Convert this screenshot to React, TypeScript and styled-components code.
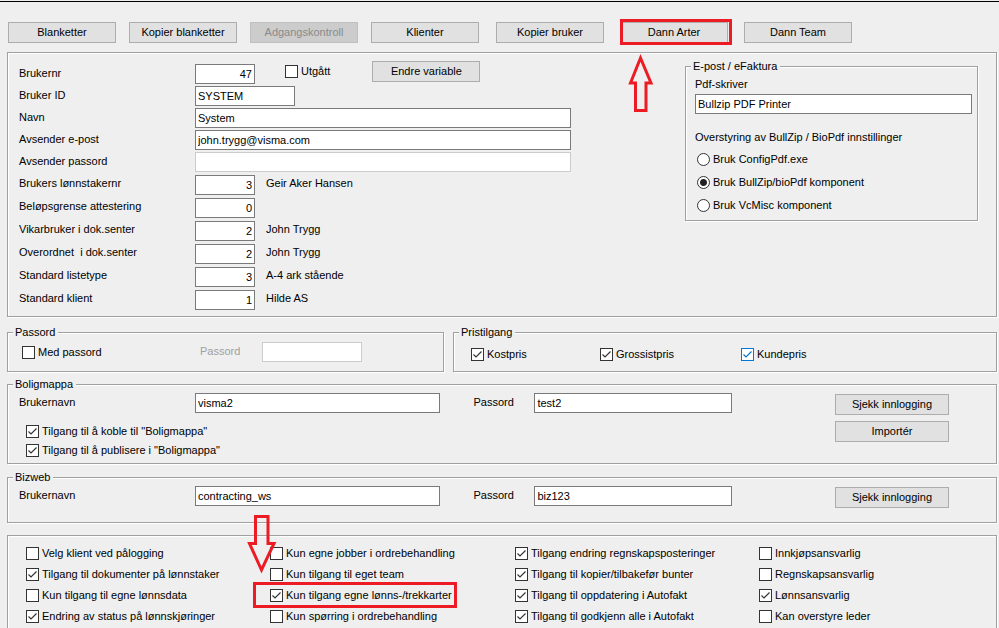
import React, { useId, type ReactNode } from "react";
import styled, { createGlobalStyle, css } from "styled-components";

const GlobalStyle = createGlobalStyle`
  *, *::before, *::after { box-sizing: border-box; }
  body {
    margin: 0;
    background: #efefef;
    color: #000;
    font: 11px/13px "Liberation Sans", Arial, sans-serif;
  }
`;

const RED = "#ed1c24";

const Page = styled.main`
  display: flex;
  flex-direction: column;
  min-height: 100vh;
  padding: 20px 2px 0 7px;
  overflow: hidden;
`;

const TopRule = styled.div`
  height: 1px;
  margin: -19px -2px 20px -7px;
  background: #000;
`;

const ButtonBar = styled.nav`
  display: flex;
  gap: 17px;
  padding-left: 1px;
`;

const ButtonGroup = styled.div<{ $gap: number }>`
  display: flex;
  gap: ${(p) => p.$gap}px;
`;

const PushButton = styled.button<{ $wide?: boolean }>`
  width: ${(p) => (p.$wide ? 114 : 108)}px;
  height: 21px;
  padding: 0;
  border: 1px solid #adadad;
  background: #e1e1e1;
  color: #000;
  font: inherit;
  white-space: nowrap;

  &:disabled {
    border-color: #bfbfbf;
    background: #cccccc;
    color: #8a8a8a;
  }
`;

const etched = css`
  border: 1px solid #a0a0a0;
  box-shadow: 1px 1px 0 #fff, inset 1px 1px 0 #fff;
`;

const Panel = styled.section`
  ${etched}
  display: flex;
  justify-content: space-between;
  margin-top: 9px;
  padding: 10px 18px 5px 11px;
`;

const Group = styled.fieldset`
  ${etched}
  min-width: 0;
  margin: 0;
  padding: 0 0 0 11px;
`;

const Legend = styled.legend`
  margin-left: -6px;
  padding: 0 3px 0 2px;
  background: #efefef;
  line-height: 13px;
`;

const Rows = styled.div`
  flex: 1;
  min-width: 0;
`;

const Row = styled.div<{ $height: number }>`
  display: grid;
  grid-template-columns: 176px minmax(0, 1fr);
  grid-template-rows: 100%;
  align-items: center;
  height: ${(p) => p.$height}px;
`;

const Label = styled.label<{ $muted?: boolean; $indent?: boolean }>`
  padding-bottom: 2px;
  padding-left: ${(p) => (p.$indent ? 33 : 0)}px;
  color: ${(p) => (p.$muted ? "#a0a0a0" : "#000")};
  white-space: pre;
`;

const Cell = styled.div`
  display: flex;
  align-items: center;
  min-width: 0;
`;

const TextBox = styled.input<{ $width?: number; $right?: boolean }>`
  width: ${(p) => (p.$width ? `${p.$width}px` : "100%")};
  min-width: 0;
  height: 20px;
  margin: 0;
  padding: 0 2px;
  border: 1px solid #7a7a7a;
  border-radius: 0;
  background: #fff;
  color: #000;
  font: inherit;
  text-align: ${(p) => (p.$right ? "right" : "left")};

  &:disabled {
    border-color: #cccccc;
  }
`;

const Note = styled.output`
  padding: 0 0 2px 11px;
  white-space: nowrap;
`;

const FirstRowExtras = styled.div`
  display: flex;
  align-items: center;
  gap: 42px;
  height: 20px;
  margin: 0 0 6px 30px;
`;

const tick = (color: string) =>
  `url("data:image/svg+xml,${encodeURIComponent(
    `<svg xmlns='http://www.w3.org/2000/svg' viewBox='0 0 11 11'><path d='M1.5 5.5 4 8 9.5 2.5' fill='none' stroke='${color}' stroke-width='1.2'/></svg>`
  )}")`;

const CheckInput = styled.input<{ $hot?: boolean }>`
  flex: none;
  appearance: none;
  width: 13px;
  height: 13px;
  margin: 0;
  border: 1px solid ${(p) => (p.$hot ? "#0078d7" : "#333")};
  background: #fff;

  &:checked {
    background-image: ${(p) => tick(p.$hot ? "#0078d7" : "#333")};
  }
`;

const RadioInput = styled.input`
  flex: none;
  appearance: none;
  width: 13px;
  height: 13px;
  margin: 0;
  border: 1px solid #333;
  border-radius: 50%;
  background: #fff;

  &:checked {
    background: radial-gradient(circle, #222 3px, #fff 4px);
  }
`;

const Choice = styled.label`
  position: relative;
  display: flex;
  align-items: center;
  gap: 3px;
  white-space: nowrap;
`;

const MailGroup = styled(Group)`
  width: 293px;
  height: 161px;
  margin-top: -3px;
  padding: 5px 5px 0 9px;
`;

const MailLegend = styled(Legend)`
  margin-left: -4px;
`;

const MailHeading = styled.p`
  margin: 17px 0 4px;
`;

const MailLabel = styled.label`
  display: block;
  margin-bottom: 3px;
`;

const RadioRow = styled.div`
  display: flex;
  align-items: center;
  height: 23px;
  padding-left: 2px;
`;

const Pair = styled.div`
  display: grid;
  grid-template-columns: 437fr 544fr;
  gap: 9px;
  margin: 9px 0 6px;
`;

const PasswordRow = styled.div`
  display: grid;
  grid-template-columns: 178px 62px 100px;
  align-items: center;
  height: 32px;
  padding: 0 0 6px 3px;
`;

const PriceRow = styled.div`
  display: grid;
  grid-template-columns: 129px 141px auto;
  align-items: center;
  height: 32px;
  padding: 0 0 1px 6px;
`;

const LoginGroup = styled(Group)<{ $height: number }>`
  height: ${(p) => p.$height}px;
  margin-bottom: 7px;
`;

const LoginRow = styled.div`
  display: grid;
  grid-template-columns: 176px minmax(0, 246fr) 94px minmax(0, 198fr) 217px;
  align-items: start;
  padding: 2px 47px 0 0;
`;

const LoginLabel = styled(Label)`
  line-height: 18px;
`;

const LoginButtons = styled.div`
  display: flex;
  flex-direction: column;
  align-items: flex-end;
  gap: 6px;
  padding-top: 1px;
`;

const LoginChecks = styled.div`
  display: grid;
  gap: 6px;
  margin-top: -17px;
  padding-left: 7px;
  justify-content: start;
`;

const AccessPanel = styled.section`
  ${etched}
  flex: 1;
  display: grid;
  grid-template-columns: 244fr 245fr 244fr 237fr;
  grid-template-rows: repeat(4, 21px);
  grid-auto-flow: column;
  align-items: center;
  margin-top: 5px;
  padding: 7px 0 0 18px;
  border-bottom: 0;
`;

const Marked = styled.div`
  position: relative;
  display: flex;
`;

const RedFrame = styled.span<{ $out: string }>`
  position: absolute;
  inset: ${(p) => p.$out};
  border: 3px solid ${RED};
  pointer-events: none;
`;

const Arrow = styled.svg`
  position: absolute;
  fill: none;
  stroke: ${RED};
  stroke-width: 3;
  pointer-events: none;
`;

const UpArrow = styled(Arrow)`
  top: 32px;
  left: 8px;
`;

const DownArrow = styled(Arrow)`
  top: -33px;
  left: -23px;
`;

type FieldProps = {
  label: string;
  value: string;
  width: number;
  height?: number;
  right?: boolean;
  disabled?: boolean;
  note?: string;
  children?: ReactNode;
};

function Field({ label, value, width, height = 23, right, disabled, note, children }: FieldProps) {
  const id = useId();
  return (
    <Row $height={height}>
      <Label htmlFor={id}>{label}</Label>
      <Cell>
        <TextBox id={id} defaultValue={value} $width={width} $right={right} disabled={disabled} />
        {note && <Note htmlFor={id}>{note}</Note>}
        {children}
      </Cell>
    </Row>
  );
}

type CheckProps = { text: string; on?: boolean; hot?: boolean; children?: ReactNode };

function Check({ text, on, hot, children }: CheckProps) {
  return (
    <Choice>
      <CheckInput type="checkbox" defaultChecked={on} $hot={hot} />
      {text}
      {children}
    </Choice>
  );
}

type LoginProps = { title: string; height: number; user: string; pass: string; buttons: string[]; children?: ReactNode };

function Login({ title, height, user, pass, buttons, children }: LoginProps) {
  const userId = useId();
  const passId = useId();
  return (
    <LoginGroup $height={height}>
      <Legend>{title}</Legend>
      <LoginRow>
        <LoginLabel htmlFor={userId}>Brukernavn</LoginLabel>
        <TextBox id={userId} defaultValue={user} />
        <LoginLabel htmlFor={passId} $indent>Passord</LoginLabel>
        <TextBox id={passId} defaultValue={pass} />
        <LoginButtons>
          {buttons.map((b) => (
            <PushButton key={b} type="button" $wide>{b}</PushButton>
          ))}
        </LoginButtons>
      </LoginRow>
      {children}
    </LoginGroup>
  );
}

const access: { text: string; on?: boolean; mark?: "arrow" | "frame" }[] = [
  { text: "Velg klient ved pålogging" },
  { text: "Tilgang til dokumenter på lønnstaker", on: true },
  { text: "Kun tilgang til egne lønnsdata" },
  { text: "Endring av status på lønnskjøringer", on: true },
  { text: "Kun egne jobber i ordrebehandling", mark: "arrow" },
  { text: "Kun tilgang til eget team" },
  { text: "Kun tilgang egne lønns-/trekkarter", on: true, mark: "frame" },
  { text: "Kun spørring i ordrebehandling" },
  { text: "Tilgang endring regnskapsposteringer", on: true },
  { text: "Tilgang til kopier/tilbakefør bunter", on: true },
  { text: "Tilgang til oppdatering i Autofakt", on: true },
  { text: "Tilgang til godkjenn alle i Autofakt", on: true },
  { text: "Innkjøpsansvarlig" },
  { text: "Regnskapsansvarlig" },
  { text: "Lønnsansvarlig", on: true },
  { text: "Kan overstyre leder" },
];

const drivers = ["Bruk ConfigPdf.exe", "Bruk BullZip/bioPdf komponent", "Bruk VcMisc komponent"];

export default function App() {
  return (
    <>
      <GlobalStyle />
      <Page>
        <TopRule />
        <ButtonBar>
          <ButtonGroup $gap={13}>
            <PushButton type="button">Blanketter</PushButton>
            <PushButton type="button">Kopier blanketter</PushButton>
            <PushButton type="button" disabled>Adgangskontroll</PushButton>
            <PushButton type="button">Klienter</PushButton>
          </ButtonGroup>
          <ButtonGroup $gap={16}>
            <PushButton type="button">Kopier bruker</PushButton>
            <Marked>
              <PushButton type="button">Dann Arter</PushButton>
              <RedFrame $out="-3px -4px -2px 0" />
              <UpArrow width="26" height="60" viewBox="0 0 26 60" aria-hidden="true">
                <path d="M12.5 4 2.5 29H7.5V56.5H18V29H23Z" />
              </UpArrow>
            </Marked>
            <PushButton type="button">Dann Team</PushButton>
          </ButtonGroup>
        </ButtonBar>

        <Panel>
          <Rows>
            <Field label="Brukernr" value="47" width={60} height={22} right>
              <FirstRowExtras>
                <Check text="Utgått" />
                <PushButton type="button">Endre variable</PushButton>
              </FirstRowExtras>
            </Field>
            <Field label="Bruker ID" value="SYSTEM" width={100} height={22} />
            <Field label="Navn" value="System" width={376} height={22} />
            <Field label="Avsender e-post" value="john.trygg@visma.com" width={376} height={22} />
            <Field label="Avsender passord" value="" width={376} height={22} disabled />
            <Field label="Brukers lønnstakernr" value="3" width={60} right note="Geir Aker Hansen" />
            <Field label="Beløpsgrense attestering" value="0" width={60} right />
            <Field label="Vikarbruker i dok.senter" value="2" width={60} right note="John Trygg" />
            <Field label="Overordnet  i dok.senter" value="2" width={60} right note="John Trygg" />
            <Field label="Standard listetype" value="3" width={60} right note="A-4 ark stående" />
            <Field label="Standard klient" value="1" width={60} right note="Hilde AS" />
          </Rows>
          <MailGroup>
            <MailLegend>E-post / eFaktura</MailLegend>
            <MailLabel htmlFor="pdf-printer">Pdf-skriver</MailLabel>
            <TextBox id="pdf-printer" defaultValue="Bullzip PDF Printer" />
            <MailHeading>Overstyring av BullZip / BioPdf innstillinger</MailHeading>
            {drivers.map((d, i) => (
              <RadioRow key={d}>
                <Choice>
                  <RadioInput type="radio" name="driver" defaultChecked={i === 1} />
                  {d}
                </Choice>
              </RadioRow>
            ))}
          </MailGroup>
        </Panel>

        <Pair>
          <Group>
            <Legend>Passord</Legend>
            <PasswordRow>
              <Check text="Med passord" />
              <Label htmlFor="password" $muted>Passord</Label>
              <TextBox id="password" disabled />
            </PasswordRow>
          </Group>
          <Group>
            <Legend>Pristilgang</Legend>
            <PriceRow>
              <Check text="Kostpris" on />
              <Check text="Grossistpris" on />
              <Check text="Kundepris" on hot />
            </PriceRow>
          </Group>
        </Pair>

        <Login title="Boligmappa" height={86} user="visma2" pass="test2" buttons={["Sjekk innlogging", "Importér"]}>
          <LoginChecks>
            <Check text={'Tilgang til å koble til "Boligmappa"'} on />
            <Check text={'Tilgang til å publisere i "Boligmappa"'} on />
          </LoginChecks>
        </Login>
        <Login title="Bizweb" height={52} user="contracting_ws" pass="biz123" buttons={["Sjekk innlogging"]} />

        <AccessPanel>
          {access.map((a) => (
            <Marked key={a.text}>
              <Check text={a.text} on={a.on}>
                {a.mark === "frame" && <RedFrame $out="-7px -5px -6px -17px" />}
                {a.mark === "arrow" && (
                  <DownArrow width="30" height="60" viewBox="0 0 30 60" aria-hidden="true">
                    <path d="M8.5 2.5H21V29.5H27L14.5 56 2.5 29.5H8.5Z" />
                  </DownArrow>
                )}
              </Check>
            </Marked>
          ))}
        </AccessPanel>
      </Page>
    </>
  );
}
